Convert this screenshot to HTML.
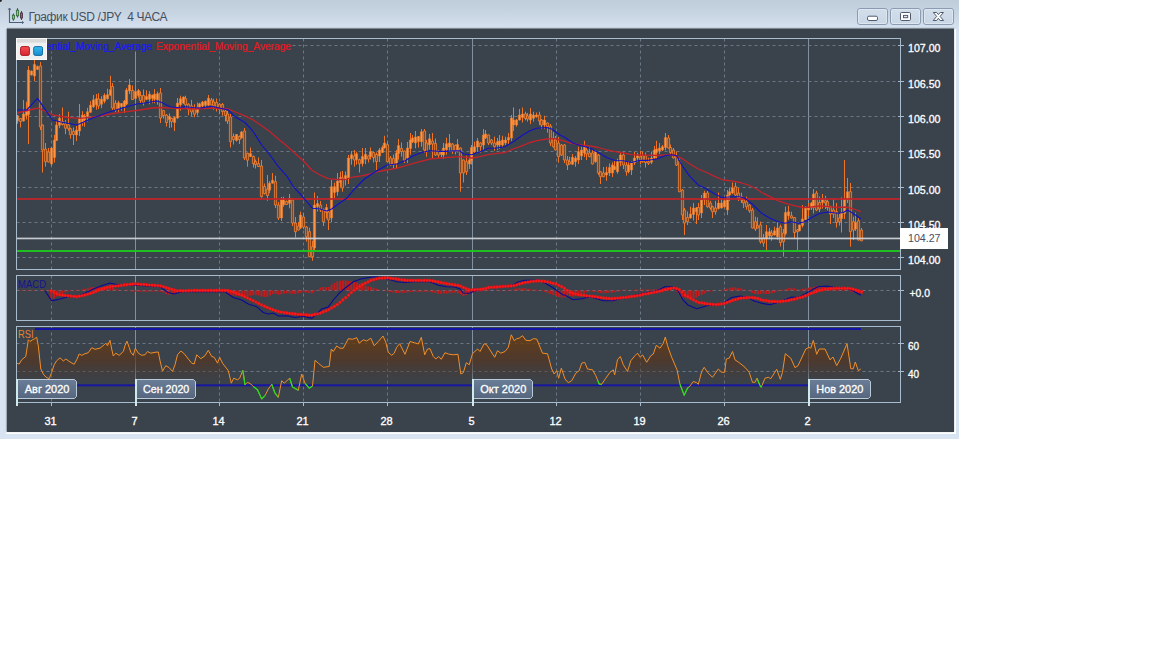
<!DOCTYPE html>
<html lang="ru"><head><meta charset="utf-8"><title>График USD /JPY 4 ЧАСА</title>
<style>
html,body{margin:0;padding:0;background:#fff;}
body{width:1152px;height:648px;position:relative;overflow:hidden;font-family:"Liberation Sans",sans-serif;}
#win{position:absolute;left:0;top:0;width:959px;height:438.5px;background:linear-gradient(#bfccda 0px,#c6d3e1 12px,#d6e2ef 29px,#d8e4f1 60px,#d8e4f1 100%);}
#win:before{content:"";position:absolute;left:0;top:0;width:2px;height:2px;background:#222;border-radius:0 0 2px 0}
#dark{position:absolute;left:6.5px;top:29px;width:947.5px;height:402.7px;background:#3a434c;box-shadow:0 -1px 1px rgba(60,70,80,.55), -1px 0 1px rgba(90,100,110,.35);}
#title{position:absolute;left:28.5px;top:9px;font-size:12px;line-height:16px;color:#474f5e;letter-spacing:-0.36px;white-space:pre;}
</style></head><body>
<div id="win">
<svg style="position:absolute;left:7px;top:5px" width="20" height="20" viewBox="7 5 20 20">
<path d="M9.5 8.3V22.5H23.3" fill="none" stroke="#4d5f77" stroke-width="1.1"/>
<path d="M8.2 9.8L9.5 8L10.8 9.8M22 21.2L23.6 22.5L22 23.8" fill="none" stroke="#4d5f77" stroke-width="0.9"/>
<path d="M13.4 13.5V20.7M17.5 8.2V17.5M21.5 11V20" stroke="#3f4a4c" stroke-width="1"/>
<rect x="12.4" y="15.2" width="2" height="3.8" fill="#8fc890" stroke="#356e3a" stroke-width="0.9"/>
<rect x="16.4" y="10.2" width="2.2" height="5.6" fill="#8fc890" stroke="#356e3a" stroke-width="0.9"/>
<rect x="20.5" y="13" width="2" height="5" fill="#8a6078" stroke="#503646" stroke-width="0.9"/>
</svg>
<div id="title">График USD /JPY  4 ЧАСА</div>
<svg style="position:absolute;left:850px;top:0" width="109" height="29" viewBox="850 0 109 29">
<defs><linearGradient id="bg1" x1="0" y1="0" x2="0" y2="1"><stop offset="0" stop-color="#d3deea"/><stop offset="1" stop-color="#c9d6e5"/></linearGradient></defs>
<g fill="url(#bg1)" stroke="#8b9bb1" stroke-width="1">
<rect x="857.5" y="8.5" width="30" height="16" rx="2.5"/><rect x="890.5" y="8.5" width="30" height="16" rx="2.5"/><rect x="923.5" y="8.5" width="30" height="16" rx="2.5"/></g>
<g fill="none" stroke="#e4ecf5" stroke-width="1" opacity="0.7">
<rect x="858.5" y="9.5" width="28" height="14" rx="1.5"/><rect x="891.5" y="9.5" width="28" height="14" rx="1.5"/><rect x="924.5" y="9.5" width="28" height="14" rx="1.5"/></g>
<rect x="867.5" y="16.2" width="10" height="4.3" rx="1.4" fill="#ffffff" stroke="#4f5a6e" stroke-width="1"/>
<rect x="900.5" y="12.5" width="10" height="8" rx="1.2" fill="#ffffff" stroke="#4f5a6e" stroke-width="1"/>
<rect x="903.5" y="15.4" width="4.2" height="2.3" fill="#dfe6ee" stroke="#4f5a6e" stroke-width="1"/>
<path d="M933.3 12.5h3.3l1.8 2.1 1.8-2.1h3.3l-3.4 3.9 3.5 4.1h-3.4l-1.8-2.2-1.8 2.2h-3.4l3.5-4.1z" fill="#ffffff" stroke="#4f5a6e" stroke-width="1" stroke-linejoin="round"/>
</svg>
<div style="position:absolute;left:6px;top:431px;width:950.3px;height:3.2px;background:#fcfdff"></div><div style="position:absolute;left:953px;top:29px;width:3.3px;height:405.2px;background:#fcfdff"></div>
<div id="dark"></div>
</div>
<svg width="1152" height="648" viewBox="0 0 1152 648" style="position:absolute;left:0;top:0" font-family="Liberation Sans, sans-serif">
<defs>
<linearGradient id="rsig" x1="0" y1="334" x2="0" y2="388" gradientUnits="userSpaceOnUse"><stop offset="0" stop-color="#6e3d0e" stop-opacity="0.85"/><stop offset="0.5" stop-color="#553520" stop-opacity="0.7"/><stop offset="1" stop-color="#40383a" stop-opacity="0"/></linearGradient>
<linearGradient id="lblg" x1="0" y1="0" x2="0" y2="1"><stop offset="0" stop-color="#6a7d97"/><stop offset="1" stop-color="#56667e"/></linearGradient>
<linearGradient id="wr" x1="0" y1="0" x2="0" y2="1"><stop offset="0" stop-color="#f45050"/><stop offset="1" stop-color="#d8242f"/></linearGradient><linearGradient id="wb" x1="0" y1="0" x2="0" y2="1"><stop offset="0" stop-color="#34bcf2"/><stop offset="1" stop-color="#1a8cca"/></linearGradient>
<clipPath id="cmain"><rect x="17" y="39" width="883" height="230"/></clipPath>
<clipPath id="crsi"><rect x="17" y="327" width="883" height="75"/></clipPath>
</defs>
<path d="M51.5 38.5V269" stroke="#6a7784" stroke-width="1" stroke-dasharray="3 3"/>
<path d="M135.5 38.5V269" stroke="#7f90a2" stroke-width="1"/>
<path d="M219.5 38.5V269" stroke="#6a7784" stroke-width="1" stroke-dasharray="3 3"/>
<path d="M303.5 38.5V269" stroke="#6a7784" stroke-width="1" stroke-dasharray="3 3"/>
<path d="M387.5 38.5V269" stroke="#6a7784" stroke-width="1" stroke-dasharray="3 3"/>
<path d="M472.5 38.5V269" stroke="#7f90a2" stroke-width="1"/>
<path d="M556.5 38.5V269" stroke="#6a7784" stroke-width="1" stroke-dasharray="3 3"/>
<path d="M640.5 38.5V269" stroke="#6a7784" stroke-width="1" stroke-dasharray="3 3"/>
<path d="M724.5 38.5V269" stroke="#6a7784" stroke-width="1" stroke-dasharray="3 3"/>
<path d="M808.5 38.5V269" stroke="#7f90a2" stroke-width="1"/>
<path d="M16.5 45.5H900.5" stroke="#6a7784" stroke-width="1" stroke-dasharray="3 3"/>
<path d="M898.0 45.5H904.0" stroke="#a9bccd" stroke-width="1"/>
<path d="M16.5 81.5H900.5" stroke="#6a7784" stroke-width="1" stroke-dasharray="3 3"/>
<path d="M898.0 81.5H904.0" stroke="#a9bccd" stroke-width="1"/>
<path d="M16.5 116.5H900.5" stroke="#6a7784" stroke-width="1" stroke-dasharray="3 3"/>
<path d="M898.0 116.5H904.0" stroke="#a9bccd" stroke-width="1"/>
<path d="M16.5 151.5H900.5" stroke="#6a7784" stroke-width="1" stroke-dasharray="3 3"/>
<path d="M898.0 151.5H904.0" stroke="#a9bccd" stroke-width="1"/>
<path d="M16.5 187.5H900.5" stroke="#6a7784" stroke-width="1" stroke-dasharray="3 3"/>
<path d="M898.0 187.5H904.0" stroke="#a9bccd" stroke-width="1"/>
<path d="M16.5 222.5H900.5" stroke="#6a7784" stroke-width="1" stroke-dasharray="3 3"/>
<path d="M898.0 222.5H904.0" stroke="#a9bccd" stroke-width="1"/>
<path d="M16.5 257.5H900.5" stroke="#6a7784" stroke-width="1" stroke-dasharray="3 3"/>
<path d="M898.0 257.5H904.0" stroke="#a9bccd" stroke-width="1"/>
<g clip-path="url(#cmain)">
<path d="M17.5 114.8V123.8M20.5 118.0V127.5M23.5 100.0V121.5M26.5 101.7V119.5M28.5 66.0V144.0M31.5 70.5V75.5M34.5 60.0V81.0M37.5 65.5V70.0M40.5 62.0V130.0M42.5 124.5V172.5M45.5 143.0V166.7M48.5 148.0V162.5M51.5 147.0V166.0M54.5 135.0V162.5M56.5 121.0V141.0M59.5 114.2V128.2M62.5 107.5V125.5M65.5 120.0V134.2M68.5 111.7V130.7M70.5 127.7V138.7M73.5 127.5V145.0M76.5 126.0V141.0M79.5 104.0V136.0M82.5 111.2V126.0M84.5 114.0V126.7M87.5 107.8V121.5M90.5 101.2V112.8M93.5 95.0V107.8M96.5 94.0V109.7M98.5 93.3V109.0M101.5 96.2V108.2M104.5 93.3V103.3M107.5 88.7V99.7M110.5 75.8V95.7M112.5 83.0V110.0M115.5 100.2V112.2M118.5 100.8V112.8M121.5 103.0V110.5M124.5 100.0V113.0M126.5 88.0V105.0M129.5 79.0V94.0M132.5 85.5V100.0M135.5 87.5V104.5M138.5 89.0V97.5M140.5 91.5V103.5M143.5 89.5V105.5M146.5 90.4V99.9M149.5 91.2V104.2M152.5 94.7V103.2M154.5 89.2V103.2M157.5 91.7V104.7M160.5 88.0V123.0M163.5 110.1V118.6M166.5 114.1V126.5M169.5 113.5V128.0M171.5 117.5V127.5M174.5 116.5V131.0M177.5 98.0V119.0M180.5 95.7V110.7M183.5 96.5V104.0M185.5 95.7V108.7M188.5 103.2V115.2M191.5 99.9V115.9M194.5 104.2V117.2M197.5 102.5V115.5M199.5 102.8V108.3M202.5 101.0V107.0M205.5 100.7V108.2M208.5 95.0V106.2M211.5 98.0V105.5M213.5 98.8V109.8M216.5 98.5V111.5M219.5 103.2V114.2M222.5 103.0V115.5M225.5 108.0V121.5M227.5 111.0V124.0M230.5 114.0V147.5M233.5 133.5V144.5M236.5 134.0V141.5M239.5 135.5V144.0M241.5 131.0V138.5M244.5 128.0V160.0M247.5 152.7V166.7M250.5 147.5V157.0M253.5 155.5V167.5M255.5 159.5V168.5M258.5 157.5V167.0M261.5 160.0V197.7M264.5 183.5V194.5M267.5 175.0V200.8M269.5 181.2V193.2M272.5 173.0V183.7M275.5 175.7V208.0M278.5 202.0V220.0M281.5 197.0V221.0M283.5 196.7V206.7M286.5 200.5V205.0M289.5 194.0V208.3M292.5 198.0V226.0M295.5 217.0V237.5M298.5 222.0V230.5M300.5 211.7V229.0M303.5 213.0V229.0M306.5 226.0V241.7M309.5 227.7V257.2M312.5 240.7V260.7M314.5 192.5V250.0M317.5 196.0V211.5M320.5 201.0V212.0M323.5 208.5V226.0M326.5 204.0V218.5M328.5 211.0V230.0M331.5 180.0V222.0M334.5 182.7V198.5M337.5 173.0V195.7M340.5 171.7V187.5M342.5 171.0V191.7M345.5 171.5V185.5M348.5 155.0V184.0M351.5 151.0V164.7M354.5 150.0V166.7M356.5 151.7V164.7M359.5 158.7V172.5M362.5 148.0V166.5M365.5 148.0V164.2M368.5 155.5V162.5M370.5 147.5V159.5M373.5 151.5V162.5M376.5 152.5V170.0M379.5 148.0V162.0M382.5 145.5V153.0M384.5 135.8V148.5M387.5 141.7V162.7M390.5 156.0V166.0M393.5 154.6V168.6M396.5 150.0V168.3M398.5 139.0V159.5M401.5 142.5V156.5M404.5 150.5V163.0M407.5 142.0V163.0M410.5 133.0V154.5M412.5 135.0V143.0M415.5 131.0V148.3M418.5 136.0V147.5M421.5 129.0V146.7M424.5 129.0V153.0M426.5 140.0V156.7M429.5 134.0V149.7M432.5 133.0V158.3M435.5 138.5V156.0M438.5 150.0V158.3M441.5 150.5V157.5M443.5 143.0V159.0M446.5 137.7V154.7M449.5 134.0V151.0M452.5 143.0V154.0M455.5 144.5V154.5M457.5 139.0V152.5M460.5 147.5V191.7M463.5 159.5V182.5M466.5 155.7V175.0M469.5 157.5V169.0M471.5 145.0V164.5M474.5 141.7V152.7M477.5 138.0V153.0M480.5 142.0V152.7M483.5 129.0V151.0M485.5 130.0V139.0M488.5 134.5V145.0M491.5 139.0V145.0M494.5 136.7V150.7M497.5 138.0V150.0M499.5 135.0V149.0M502.5 135.8V147.0M505.5 136.7V145.0M508.5 133.0V144.0M511.5 115.0V141.0M513.5 107.5V131.0M516.5 119.0V126.7M519.5 109.0V120.5M522.5 107.5V122.5M525.5 111.7V120.3M527.5 113.0V121.7M530.5 108.1V124.1M533.5 111.7V121.7M536.5 112.5V117.7M539.5 111.7V125.0M541.5 119.0V129.0M544.5 115.8V129.0M547.5 122.5V132.7M550.5 124.0V146.0M553.5 132.0V147.7M555.5 136.0V150.5M558.5 137.0V162.7M561.5 144.0V156.0M564.5 144.0V163.0M567.5 156.0V170.0M569.5 156.7V164.5M572.5 154.0V164.8M575.5 156.0V166.7M578.5 146.7V164.0M581.5 146.7V160.0M584.5 140.8V157.0M586.5 147.0V160.0M589.5 147.0V157.2M592.5 149.0V164.5M595.5 150.0V162.7M598.5 154.0V175.0M600.5 171.2V184.0M603.5 167.0V177.2M606.5 166.7V180.8M609.5 163.5V176.0M612.5 162.5V177.0M614.5 160.5V170.0M617.5 158.7V173.7M620.5 151.7V166.2M623.5 151.7V169.0M626.5 161.7V175.7M628.5 161.0V173.3M631.5 161.5V175.0M634.5 151.7V165.0M637.5 152.8V162.0M640.5 150.8V164.0M642.5 151.7V162.7M645.5 152.5V167.5M648.5 157.7V165.0M651.5 151.7V164.2M654.5 146.0V159.0M656.5 140.8V158.5M659.5 143.0V154.0M662.5 145.0V151.0M665.5 133.0V150.5M668.5 135.0V148.5M670.5 144.5V155.5M673.5 148.0V158.5M676.5 151.7V166.0M679.5 158.7V192.2M682.5 189.0V220.0M684.5 208.0V235.0M687.5 211.5V225.0M690.5 206.7V218.5M693.5 203.0V220.5M696.5 207.0V224.0M698.5 203.0V220.0M701.5 195.0V218.0M704.5 190.8V205.0M707.5 191.0V207.7M710.5 200.8V210.0M712.5 205.7V218.0M715.5 200.8V214.7M718.5 192.5V209.5M721.5 198.0V208.5M724.5 197.7V207.7M727.5 190.0V215.0M729.5 187.5V201.0M732.5 182.5V194.0M735.5 182.5V196.0M738.5 188.0V201.0M741.5 192.7V203.0M743.5 198.0V208.0M746.5 196.7V209.7M749.5 204.0V212.8M752.5 208.0V228.5M755.5 216.7V231.0M757.5 217.5V228.5M760.5 221.7V243.7M763.5 234.0V246.7M766.5 225.0V250.8M769.5 228.0V238.8M771.5 230.0V240.8M774.5 226.7V235.5M777.5 221.7V239.7M780.5 224.7V246.5M783.5 229.0V256.7M785.5 206.7V235.5M788.5 205.8V219.8M791.5 211.7V218.5M794.5 217.0V238.5M797.5 229.0V250.0M799.5 224.5V231.3M802.5 205.0V227.5M805.5 206.0V220.0M808.5 203.0V216.0M811.5 202.0V210.0M813.5 189.0V213.5M816.5 190.8V211.0M819.5 196.5V212.0M822.5 194.0V208.5M825.5 195.8V209.0M827.5 199.7V210.5M830.5 205.7V224.0M833.5 199.0V218.0M836.5 203.0V227.5M839.5 214.0V225.7M841.5 197.5V232.5M844.5 160.0V219.0M847.5 178.0V203.0M850.5 183.0V246.7M853.5 216.7V240.0M855.5 212.5V231.0M858.5 217.5V240.5M861.5 228.0V241.3" stroke="#f27422" stroke-width="1" fill="none"/>
<path d="M16.4 115.8h2.2V120.8h-2.2zM22.4 114.0h2.2V121.0h-2.2zM25.4 110.5h2.2V115.5h-2.2zM27.4 70.0h2.2V114.5h-2.2zM30.4 71.0h2.2V75.0h-2.2zM33.4 64.5h2.2V76.0h-2.2zM36.4 66.5h2.2V69.5h-2.2zM50.4 148.0h2.2V164.0h-2.2zM53.4 140.0h2.2V157.5h-2.2zM55.4 125.0h2.2V140.5h-2.2zM58.4 118.2h2.2V125.2h-2.2zM75.4 130.0h2.2V135.0h-2.2zM78.4 118.0h2.2V131.0h-2.2zM81.4 115.2h2.2V122.0h-2.2zM83.4 116.0h2.2V120.0h-2.2zM86.4 111.8h2.2V116.5h-2.2zM89.4 105.2h2.2V112.3h-2.2zM92.4 99.8h2.2V106.8h-2.2zM95.4 98.7h2.2V104.7h-2.2zM100.4 99.2h2.2V104.2h-2.2zM103.4 95.3h2.2V101.3h-2.2zM106.4 94.7h2.2V98.7h-2.2zM109.4 89.7h2.2V95.2h-2.2zM117.4 102.8h2.2V108.8h-2.2zM120.4 103.5h2.2V106.5h-2.2zM123.4 101.0h2.2V107.0h-2.2zM125.4 90.0h2.2V104.0h-2.2zM128.4 85.0h2.2V91.0h-2.2zM134.4 91.5h2.2V98.5h-2.2zM137.4 90.5h2.2V95.5h-2.2zM145.4 96.4h2.2V99.4h-2.2zM148.4 94.2h2.2V99.2h-2.2zM151.4 95.2h2.2V98.2h-2.2zM153.4 94.2h2.2V99.2h-2.2zM156.4 93.7h2.2V99.7h-2.2zM168.4 116.5h2.2V119.5h-2.2zM173.4 117.5h2.2V122.5h-2.2zM176.4 103.0h2.2V118.0h-2.2zM179.4 98.7h2.2V104.7h-2.2zM182.4 97.0h2.2V103.0h-2.2zM196.4 107.5h2.2V112.5h-2.2zM198.4 103.8h2.2V107.8h-2.2zM201.4 102.0h2.2V106.0h-2.2zM204.4 101.2h2.2V105.2h-2.2zM207.4 98.2h2.2V105.2h-2.2zM235.4 134.5h2.2V140.5h-2.2zM240.4 132.0h2.2V138.0h-2.2zM249.4 153.5h2.2V156.5h-2.2zM268.4 183.2h2.2V190.2h-2.2zM271.4 180.2h2.2V183.2h-2.2zM280.4 200.0h2.2V218.0h-2.2zM282.4 198.7h2.2V204.7h-2.2zM288.4 198.3h2.2V203.3h-2.2zM299.4 215.0h2.2V228.0h-2.2zM313.4 205.0h2.2V248.0h-2.2zM316.4 203.5h2.2V206.5h-2.2zM325.4 207.5h2.2V212.5h-2.2zM330.4 186.7h2.2V218.0h-2.2zM333.4 186.7h2.2V192.5h-2.2zM336.4 181.0h2.2V191.7h-2.2zM339.4 177.5h2.2V182.5h-2.2zM344.4 175.5h2.2V179.5h-2.2zM347.4 158.0h2.2V178.0h-2.2zM350.4 154.7h2.2V158.7h-2.2zM355.4 153.7h2.2V159.7h-2.2zM361.4 156.5h2.2V163.5h-2.2zM364.4 154.2h2.2V159.2h-2.2zM369.4 151.5h2.2V156.5h-2.2zM378.4 150.0h2.2V156.0h-2.2zM381.4 147.5h2.2V152.5h-2.2zM383.4 143.0h2.2V148.0h-2.2zM395.4 153.0h2.2V163.2h-2.2zM397.4 145.5h2.2V153.5h-2.2zM406.4 148.0h2.2V158.0h-2.2zM409.4 140.0h2.2V148.5h-2.2zM411.4 138.0h2.2V142.0h-2.2zM414.4 137.0h2.2V143.0h-2.2zM417.4 136.5h2.2V141.5h-2.2zM420.4 131.7h2.2V141.7h-2.2zM428.4 138.7h2.2V144.7h-2.2zM440.4 151.5h2.2V154.5h-2.2zM442.4 148.0h2.2V155.0h-2.2zM445.4 143.7h2.2V149.7h-2.2zM448.4 143.0h2.2V147.0h-2.2zM456.4 144.5h2.2V151.5h-2.2zM468.4 160.0h2.2V164.0h-2.2zM470.4 147.5h2.2V160.5h-2.2zM473.4 146.7h2.2V151.7h-2.2zM476.4 141.0h2.2V147.0h-2.2zM482.4 135.0h2.2V145.0h-2.2zM484.4 134.0h2.2V138.0h-2.2zM496.4 141.7h2.2V145.0h-2.2zM498.4 141.0h2.2V145.0h-2.2zM501.4 140.0h2.2V145.0h-2.2zM504.4 140.0h2.2V143.0h-2.2zM507.4 137.5h2.2V140.0h-2.2zM510.4 118.0h2.2V138.0h-2.2zM512.4 120.0h2.2V125.0h-2.2zM515.4 120.0h2.2V125.0h-2.2zM518.4 115.0h2.2V120.0h-2.2zM521.4 114.0h2.2V117.5h-2.2zM529.4 114.1h2.2V120.1h-2.2zM532.4 115.0h2.2V118.3h-2.2zM535.4 115.0h2.2V116.7h-2.2zM543.4 120.0h2.2V125.0h-2.2zM571.4 157.3h2.2V164.3h-2.2zM574.4 158.0h2.2V161.7h-2.2zM577.4 151.7h2.2V160.0h-2.2zM580.4 150.0h2.2V156.0h-2.2zM583.4 146.7h2.2V153.0h-2.2zM594.4 151.7h2.2V161.7h-2.2zM605.4 172.5h2.2V175.0h-2.2zM608.4 167.5h2.2V173.0h-2.2zM611.4 165.0h2.2V173.0h-2.2zM613.4 166.5h2.2V169.5h-2.2zM616.4 161.7h2.2V171.7h-2.2zM619.4 155.0h2.2V162.2h-2.2zM627.4 165.0h2.2V171.7h-2.2zM630.4 162.5h2.2V170.0h-2.2zM633.4 158.0h2.2V163.0h-2.2zM636.4 155.8h2.2V158.0h-2.2zM650.4 158.0h2.2V162.2h-2.2zM653.4 150.0h2.2V158.0h-2.2zM655.4 149.0h2.2V152.5h-2.2zM658.4 148.0h2.2V151.0h-2.2zM661.4 146.7h2.2V150.0h-2.2zM664.4 137.5h2.2V147.5h-2.2zM689.4 214.0h2.2V218.0h-2.2zM692.4 208.0h2.2V214.5h-2.2zM695.4 208.0h2.2V211.7h-2.2zM700.4 200.0h2.2V213.0h-2.2zM703.4 193.0h2.2V200.0h-2.2zM717.4 203.0h2.2V208.5h-2.2zM720.4 203.0h2.2V208.0h-2.2zM723.4 200.7h2.2V206.7h-2.2zM726.4 195.0h2.2V210.0h-2.2zM728.4 191.7h2.2V195.0h-2.2zM731.4 188.0h2.2V193.0h-2.2zM765.4 231.7h2.2V238.5h-2.2zM768.4 231.7h2.2V235.8h-2.2zM773.4 230.8h2.2V235.0h-2.2zM776.4 228.0h2.2V236.7h-2.2zM784.4 212.5h2.2V233.5h-2.2zM787.4 211.7h2.2V215.8h-2.2zM798.4 225.0h2.2V230.8h-2.2zM801.4 219.0h2.2V225.5h-2.2zM804.4 208.0h2.2V219.5h-2.2zM807.4 207.5h2.2V210.0h-2.2zM810.4 203.0h2.2V208.0h-2.2zM812.4 194.0h2.2V207.5h-2.2zM821.4 199.0h2.2V202.5h-2.2zM840.4 213.0h2.2V218.5h-2.2zM843.4 199.0h2.2V213.5h-2.2zM846.4 191.7h2.2V200.0h-2.2zM854.4 222.5h2.2V229.0h-2.2z" fill="#ff9442" stroke="#f27c28" stroke-width="0.5"/>
<path d="M19.4 118.5h2.2V121.5h-2.2zM39.4 66.0h2.2V127.0h-2.2zM41.4 125.0h2.2V150.0h-2.2zM44.4 149.0h2.2V161.7h-2.2zM47.4 152.0h2.2V162.0h-2.2zM61.4 121.5h2.2V124.5h-2.2zM64.4 124.0h2.2V128.2h-2.2zM67.4 124.7h2.2V128.7h-2.2zM69.4 128.7h2.2V134.7h-2.2zM72.4 131.5h2.2V134.5h-2.2zM97.4 99.0h2.2V106.0h-2.2zM111.4 86.5h2.2V108.0h-2.2zM114.4 103.2h2.2V110.2h-2.2zM131.4 90.5h2.2V99.5h-2.2zM139.4 95.5h2.2V100.5h-2.2zM142.4 95.5h2.2V102.5h-2.2zM159.4 93.0h2.2V118.0h-2.2zM162.4 110.6h2.2V115.6h-2.2zM165.4 115.1h2.2V122.5h-2.2zM170.4 118.5h2.2V121.5h-2.2zM184.4 98.7h2.2V104.7h-2.2zM187.4 104.2h2.2V109.2h-2.2zM190.4 105.9h2.2V111.9h-2.2zM193.4 109.2h2.2V114.2h-2.2zM210.4 100.0h2.2V105.0h-2.2zM212.4 101.8h2.2V105.8h-2.2zM215.4 102.5h2.2V107.5h-2.2zM218.4 104.2h2.2V109.2h-2.2zM221.4 104.5h2.2V111.5h-2.2zM224.4 111.0h2.2V115.5h-2.2zM226.4 114.0h2.2V121.0h-2.2zM229.4 117.0h2.2V141.7h-2.2zM232.4 136.5h2.2V139.5h-2.2zM238.4 136.5h2.2V139.5h-2.2zM243.4 131.0h2.2V158.0h-2.2zM246.4 153.2h2.2V160.2h-2.2zM252.4 156.5h2.2V163.5h-2.2zM254.4 161.5h2.2V164.5h-2.2zM257.4 163.5h2.2V166.5h-2.2zM260.4 166.0h2.2V196.7h-2.2zM263.4 186.5h2.2V193.5h-2.2zM266.4 189.2h2.2V195.5h-2.2zM274.4 181.7h2.2V205.0h-2.2zM277.4 205.0h2.2V218.0h-2.2zM285.4 201.5h2.2V204.5h-2.2zM291.4 200.0h2.2V223.0h-2.2zM294.4 223.0h2.2V231.7h-2.2zM297.4 226.0h2.2V230.0h-2.2zM302.4 217.0h2.2V227.0h-2.2zM305.4 227.0h2.2V236.7h-2.2zM308.4 231.7h2.2V256.7h-2.2zM311.4 246.7h2.2V256.7h-2.2zM319.4 205.0h2.2V210.0h-2.2zM322.4 209.5h2.2V221.7h-2.2zM327.4 212.0h2.2V220.0h-2.2zM341.4 178.0h2.2V188.0h-2.2zM353.4 156.0h2.2V160.0h-2.2zM358.4 159.7h2.2V163.7h-2.2zM367.4 156.0h2.2V159.0h-2.2zM372.4 152.5h2.2V157.5h-2.2zM375.4 154.5h2.2V161.5h-2.2zM386.4 144.7h2.2V161.7h-2.2zM389.4 158.0h2.2V165.0h-2.2zM392.4 158.6h2.2V164.6h-2.2zM400.4 148.5h2.2V151.5h-2.2zM403.4 151.0h2.2V160.0h-2.2zM423.4 131.0h2.2V150.0h-2.2zM425.4 143.0h2.2V151.7h-2.2zM431.4 141.0h2.2V144.0h-2.2zM434.4 143.5h2.2V155.0h-2.2zM437.4 151.0h2.2V155.0h-2.2zM451.4 144.0h2.2V151.0h-2.2zM454.4 145.5h2.2V150.5h-2.2zM459.4 148.0h2.2V173.0h-2.2zM462.4 160.0h2.2V173.0h-2.2zM465.4 161.7h2.2V171.7h-2.2zM479.4 143.0h2.2V146.7h-2.2zM487.4 135.0h2.2V143.0h-2.2zM490.4 140.0h2.2V143.0h-2.2zM493.4 143.0h2.2V146.7h-2.2zM524.4 114.0h2.2V118.3h-2.2zM526.4 116.0h2.2V119.0h-2.2zM538.4 115.0h2.2V121.0h-2.2zM540.4 120.0h2.2V125.0h-2.2zM546.4 123.0h2.2V126.7h-2.2zM549.4 126.0h2.2V143.0h-2.2zM552.4 138.0h2.2V146.7h-2.2zM554.4 140.0h2.2V150.0h-2.2zM557.4 143.0h2.2V156.7h-2.2zM560.4 145.0h2.2V155.0h-2.2zM563.4 145.0h2.2V160.0h-2.2zM566.4 160.0h2.2V165.0h-2.2zM568.4 161.7h2.2V164.0h-2.2zM585.4 150.0h2.2V154.0h-2.2zM588.4 153.0h2.2V156.7h-2.2zM591.4 153.0h2.2V164.0h-2.2zM597.4 155.0h2.2V173.0h-2.2zM599.4 171.7h2.2V176.7h-2.2zM602.4 173.0h2.2V176.7h-2.2zM622.4 155.0h2.2V165.0h-2.2zM625.4 165.0h2.2V171.7h-2.2zM639.4 156.7h2.2V160.0h-2.2zM641.4 155.7h2.2V161.7h-2.2zM644.4 155.8h2.2V162.5h-2.2zM647.4 161.7h2.2V163.3h-2.2zM667.4 138.0h2.2V148.0h-2.2zM669.4 147.5h2.2V152.5h-2.2zM672.4 150.0h2.2V158.0h-2.2zM675.4 156.7h2.2V165.0h-2.2zM678.4 161.7h2.2V191.7h-2.2zM681.4 190.0h2.2V215.0h-2.2zM683.4 210.0h2.2V223.0h-2.2zM686.4 217.5h2.2V221.7h-2.2zM697.4 207.5h2.2V215.0h-2.2zM706.4 193.0h2.2V206.7h-2.2zM709.4 203.0h2.2V208.0h-2.2zM711.4 206.7h2.2V211.7h-2.2zM714.4 208.0h2.2V211.7h-2.2zM734.4 186.7h2.2V195.0h-2.2zM737.4 193.0h2.2V198.0h-2.2zM740.4 196.7h2.2V200.0h-2.2zM742.4 200.0h2.2V203.0h-2.2zM745.4 201.7h2.2V206.7h-2.2zM748.4 205.0h2.2V210.8h-2.2zM751.4 210.0h2.2V228.0h-2.2zM754.4 221.7h2.2V229.0h-2.2zM756.4 225.8h2.2V228.0h-2.2zM759.4 225.0h2.2V241.7h-2.2zM762.4 238.0h2.2V243.0h-2.2zM770.4 233.0h2.2V235.8h-2.2zM779.4 226.7h2.2V242.5h-2.2zM782.4 233.0h2.2V241.7h-2.2zM790.4 215.8h2.2V218.0h-2.2zM793.4 217.5h2.2V232.5h-2.2zM796.4 230.0h2.2V231.7h-2.2zM815.4 193.0h2.2V210.0h-2.2zM818.4 202.5h2.2V209.0h-2.2zM824.4 200.8h2.2V203.0h-2.2zM826.4 201.7h2.2V207.5h-2.2zM829.4 206.7h2.2V214.0h-2.2zM832.4 210.0h2.2V214.0h-2.2zM835.4 211.7h2.2V222.5h-2.2zM838.4 218.0h2.2V221.7h-2.2zM849.4 191.7h2.2V231.7h-2.2zM852.4 221.7h2.2V230.0h-2.2zM857.4 220.8h2.2V240.0h-2.2zM860.4 230.0h2.2V240.8h-2.2z" fill="#7a4a2a" stroke="#f58232" stroke-width="0.8"/>
</g>
<rect x="17" y="198" width="884" height="2" fill="#c0242a" opacity="0.88"/>
<rect x="17" y="237.6" width="884" height="1.7" fill="#d2d5d8" opacity="0.92"/>
<rect x="17" y="250" width="884" height="2" fill="#1fc61f" opacity="0.95"/>
<g clip-path="url(#cmain)">
<polyline points="17.0,113.0 38.0,108.0 53.0,115.0 68.0,117.5 80.0,118.3 96.7,116.7 110.0,114.0 126.7,111.7 140.0,110.0 151.7,108.0 160.0,107.5 176.7,108.3 195.0,109.0 211.7,108.0 228.3,109.0 236.7,112.5 245.0,115.8 253.3,120.0 261.7,125.8 270.0,131.7 278.3,139.0 286.7,145.8 295.0,153.3 303.3,160.8 311.7,170.0 320.0,175.0 328.3,178.7 336.7,179.5 345.0,179.5 353.3,177.0 361.7,175.8 370.0,174.0 378.0,171.7 386.7,170.0 396.7,168.3 413.3,163.3 430.0,159.0 446.7,157.5 460.0,156.7 471.7,158.0 480.0,156.7 488.3,154.7 496.7,153.3 505.0,152.5 513.3,149.0 521.7,145.8 530.0,142.5 538.3,140.3 546.7,139.0 555.0,138.7 563.3,140.8 571.7,143.3 581.7,145.0 590.0,145.8 598.3,147.5 606.7,150.0 615.0,151.7 623.3,153.0 631.7,154.7 640.0,155.0 656.7,155.3 673.3,154.7 681.7,158.3 690.0,164.0 698.3,169.0 706.7,172.5 715.0,176.7 723.3,180.0 731.7,180.8 740.0,182.5 748.3,185.0 756.7,189.0 761.7,192.5 770.0,196.7 778.3,200.8 786.7,203.7 795.0,205.8 803.3,207.5 811.7,207.0 820.0,205.8 828.3,206.7 836.7,207.5 845.0,207.0 851.7,208.3 856.7,210.0 860.8,211.7" fill="none" stroke="#c4222a" stroke-width="1.3" stroke-linejoin="round"/>
<polyline points="17.0,110.0 26.7,110.0 37.5,98.3 52.5,120.0 60.0,121.7 76.7,125.0 93.0,118.0 110.0,111.7 126.7,106.7 136.7,104.0 148.0,102.5 156.7,101.0 161.7,102.5 170.0,106.7 176.7,107.5 185.0,106.7 193.0,107.5 201.7,108.0 211.7,106.3 228.3,110.0 235.0,116.7 245.0,122.5 253.3,131.7 261.7,145.0 270.0,155.0 278.3,166.7 286.7,175.8 293.3,186.7 303.3,197.5 312.5,208.3 320.0,209.0 326.7,211.0 331.7,209.0 338.3,204.0 346.7,198.3 355.0,188.3 363.3,180.0 371.7,174.0 380.0,169.0 387.5,165.0 396.7,164.0 405.0,160.8 413.3,155.8 421.7,152.5 430.0,150.8 438.3,151.3 446.7,151.3 455.0,150.8 460.0,150.8 463.3,154.0 471.7,154.7 480.0,151.7 488.3,148.3 496.7,148.0 505.0,146.7 513.3,141.7 521.7,135.8 530.0,130.8 536.7,128.3 546.7,127.5 551.7,129.0 560.0,135.0 565.0,137.5 573.3,143.3 581.7,145.8 590.0,148.3 598.3,152.5 606.7,157.5 615.0,160.5 623.3,160.8 631.7,162.5 640.0,160.3 648.3,160.3 656.7,159.0 665.0,155.8 671.7,154.7 676.7,155.8 681.7,165.0 690.0,176.7 698.3,185.0 706.7,189.0 715.0,194.0 721.7,197.5 731.7,196.7 740.0,196.7 745.0,198.3 753.3,205.0 761.7,213.3 770.0,218.3 778.3,221.7 785.0,223.3 791.7,221.7 798.3,223.3 805.0,221.7 811.7,217.5 820.0,213.3 828.3,212.0 836.7,213.3 843.3,212.5 847.5,210.0 851.7,212.5 856.7,215.8 860.8,219.0" fill="none" stroke="#1212c4" stroke-width="1.15" stroke-linejoin="round"/>
</g>
<rect x="16.5" y="38.5" width="884.0" height="231" fill="none" stroke="#a9bccd" stroke-width="1"/>
<rect x="17" y="39" width="275" height="12.5" fill="#3a434c"/>
<text x="17" y="50.4" font-size="11" fill="#1818f8" stroke="#1818f8" stroke-width="0.2" textLength="135" lengthAdjust="spacingAndGlyphs">Exponential_Moving_Average</text>
<text x="156" y="50.4" font-size="11" fill="#e8181e" stroke="#e8181e" stroke-width="0.2" textLength="135" lengthAdjust="spacingAndGlyphs">Exponential_Moving_Average</text>
<text x="908" y="52.0" font-size="11" fill="#ffffff" stroke="#ffffff" stroke-width="0.3" textLength="32.5" lengthAdjust="spacingAndGlyphs">107.00</text>
<text x="908" y="88.0" font-size="11" fill="#ffffff" stroke="#ffffff" stroke-width="0.3" textLength="32.5" lengthAdjust="spacingAndGlyphs">106.50</text>
<text x="908" y="123.0" font-size="11" fill="#ffffff" stroke="#ffffff" stroke-width="0.3" textLength="32.5" lengthAdjust="spacingAndGlyphs">106.00</text>
<text x="908" y="158.0" font-size="11" fill="#ffffff" stroke="#ffffff" stroke-width="0.3" textLength="32.5" lengthAdjust="spacingAndGlyphs">105.50</text>
<text x="908" y="194.0" font-size="11" fill="#ffffff" stroke="#ffffff" stroke-width="0.3" textLength="32.5" lengthAdjust="spacingAndGlyphs">105.00</text>
<text x="908" y="229.0" font-size="11" fill="#ffffff" stroke="#ffffff" stroke-width="0.3" textLength="32.5" lengthAdjust="spacingAndGlyphs">104.50</text>
<text x="908" y="264.0" font-size="11" fill="#ffffff" stroke="#ffffff" stroke-width="0.3" textLength="32.5" lengthAdjust="spacingAndGlyphs">104.00</text>
<rect x="900" y="228" width="48" height="21" fill="#ffffff"/>
<text x="908" y="242.2" font-size="11" fill="#474c63" textLength="32.5" lengthAdjust="spacingAndGlyphs">104.27</text>
<path d="M51.5 275.5V320.5" stroke="#6a7784" stroke-width="1" stroke-dasharray="3 3"/>
<path d="M135.5 275.5V320.5" stroke="#7f90a2" stroke-width="1"/>
<path d="M219.5 275.5V320.5" stroke="#6a7784" stroke-width="1" stroke-dasharray="3 3"/>
<path d="M303.5 275.5V320.5" stroke="#6a7784" stroke-width="1" stroke-dasharray="3 3"/>
<path d="M387.5 275.5V320.5" stroke="#6a7784" stroke-width="1" stroke-dasharray="3 3"/>
<path d="M472.5 275.5V320.5" stroke="#7f90a2" stroke-width="1"/>
<path d="M556.5 275.5V320.5" stroke="#6a7784" stroke-width="1" stroke-dasharray="3 3"/>
<path d="M640.5 275.5V320.5" stroke="#6a7784" stroke-width="1" stroke-dasharray="3 3"/>
<path d="M724.5 275.5V320.5" stroke="#6a7784" stroke-width="1" stroke-dasharray="3 3"/>
<path d="M808.5 275.5V320.5" stroke="#7f90a2" stroke-width="1"/>
<path d="M16.5 290.5H900.5" stroke="#6a7784" stroke-width="1" stroke-dasharray="3 3"/>
<path d="M898.0 290.5H904.0" stroke="#a9bccd" stroke-width="1"/>
<path d="M20.4 290.5v0.6M23.2 290.5v-0.5M26.0 290.5v0.6M28.8 290.5v0.6M31.6 290.5v-0.5M34.4 290.5v0.6M40.0 290.5v0.6M42.8 290.5v-0.8M45.6 290.5v0.6M48.4 290.5v-0.5M51.2 290.5v9.3M54.1 290.5v7.7M56.9 290.5v5.9M59.7 290.5v4.2M62.5 290.5v3.1M65.3 290.5v2.0M68.1 290.5v0.9M70.9 290.5v0.6M73.7 290.5v0.8M76.5 290.5v-0.8M79.3 290.5v-0.5M82.1 290.5v-1.1M84.9 290.5v-1.7M87.7 290.5v-2.3M90.5 290.5v-2.9M93.3 290.5v-3.5M96.1 290.5v-3.4M98.9 290.5v-3.3M101.7 290.5v-3.2M104.5 290.5v-3.4M107.3 290.5v-3.5M110.1 290.5v-3.7M112.9 290.5v-2.7M115.7 290.5v-1.7M118.5 290.5v-0.8M121.3 290.5v-0.5M127.0 290.5v-0.8M129.8 290.5v0.8M132.6 290.5v0.9M135.4 290.5v1.3M138.2 290.5v1.3M141.0 290.5v1.3M143.8 290.5v1.3M146.6 290.5v1.2M149.4 290.5v1.1M152.2 290.5v1.0M155.0 290.5v0.9M157.8 290.5v0.9M160.6 290.5v1.2M163.4 290.5v2.3M166.2 290.5v3.5M169.0 290.5v4.2M171.8 290.5v4.1M174.6 290.5v3.6M177.4 290.5v2.2M180.2 290.5v1.3M183.0 290.5v0.9M185.8 290.5v0.9M188.6 290.5v1.0M191.4 290.5v1.1M194.3 290.5v1.2M197.1 290.5v1.2M199.9 290.5v1.2M202.7 290.5v1.2M205.5 290.5v1.2M208.3 290.5v1.2M211.1 290.5v1.2M213.9 290.5v1.2M216.7 290.5v1.2M219.5 290.5v1.2M222.3 290.5v1.2M225.1 290.5v1.3M227.9 290.5v3.2M230.7 290.5v4.4M233.5 290.5v5.3M236.3 290.5v5.2M239.1 290.5v4.9M241.9 290.5v4.7M244.7 290.5v5.2M247.5 290.5v5.6M250.3 290.5v5.3M253.1 290.5v4.8M255.9 290.5v4.3M258.7 290.5v5.0M261.5 290.5v6.0M264.4 290.5v6.6M267.2 290.5v6.2M270.0 290.5v5.0M272.8 290.5v3.4M275.6 290.5v3.6M278.4 290.5v4.3M281.2 290.5v3.8M284.0 290.5v3.3M286.8 290.5v2.8M289.6 290.5v3.0M292.4 290.5v3.3M295.2 290.5v3.5M298.0 290.5v2.8M300.8 290.5v2.2M303.6 290.5v1.7M306.4 290.5v2.1M309.2 290.5v2.6M312.0 290.5v2.8M314.8 290.5v1.1M317.6 290.5v-0.8M320.4 290.5v-2.9M323.2 290.5v-3.5M326.0 290.5v-3.2M328.8 290.5v-3.4M331.6 290.5v-5.7M334.5 290.5v-7.6M337.3 290.5v-9.0M340.1 290.5v-9.8M342.9 290.5v-9.9M345.7 290.5v-9.9M348.5 290.5v-9.6M351.3 290.5v-9.3M354.1 290.5v-8.8M356.9 290.5v-7.9M359.7 290.5v-7.0M362.5 290.5v-6.0M365.3 290.5v-5.1M368.1 290.5v-4.1M370.9 290.5v-3.4M373.7 290.5v-2.7M376.5 290.5v-1.8M379.3 290.5v-1.0M384.9 290.5v-0.8M387.7 290.5v1.0M390.5 290.5v1.5M393.3 290.5v2.1M396.1 290.5v2.6M398.9 290.5v2.6M401.7 290.5v2.4M404.6 290.5v2.2M407.4 290.5v1.9M410.2 290.5v1.6M413.0 290.5v1.2M415.8 290.5v1.2M418.6 290.5v1.2M421.4 290.5v1.2M424.2 290.5v1.2M427.0 290.5v1.2M429.8 290.5v1.2M432.6 290.5v1.9M435.4 290.5v2.6M438.2 290.5v3.3M441.0 290.5v3.2M443.8 290.5v3.1M446.6 290.5v3.0M449.4 290.5v2.7M452.2 290.5v2.3M455.0 290.5v2.0M457.8 290.5v2.7M460.6 290.5v3.7M463.4 290.5v5.5M466.2 290.5v4.4M469.0 290.5v3.6M471.8 290.5v2.3M474.7 290.5v1.2M477.5 290.5v0.9M480.3 290.5v0.8M485.9 290.5v0.8M488.7 290.5v-0.8M497.1 290.5v-0.8M499.9 290.5v0.8M505.5 290.5v-0.5M508.3 290.5v-0.6M511.1 290.5v-0.7M513.9 290.5v-1.2M516.7 290.5v-2.0M519.5 290.5v-2.3M522.3 290.5v-2.2M525.1 290.5v-2.3M527.9 290.5v-1.8M530.7 290.5v-1.3M533.5 290.5v-1.0M536.3 290.5v-0.7M539.1 290.5v-0.6M541.9 290.5v-0.8M544.8 290.5v1.4M547.6 290.5v2.6M550.4 290.5v3.6M553.2 290.5v4.6M556.0 290.5v5.6M558.8 290.5v6.4M561.6 290.5v7.2M564.4 290.5v6.7M567.2 290.5v5.9M570.0 290.5v5.4M572.8 290.5v6.3M575.6 290.5v5.4M578.4 290.5v4.4M581.2 290.5v3.7M584.0 290.5v2.7M586.8 290.5v1.7M589.6 290.5v0.7M592.4 290.5v1.0M595.2 290.5v1.5M598.0 290.5v1.8M600.8 290.5v2.4M603.6 290.5v2.8M606.4 290.5v2.5M609.2 290.5v2.3M612.0 290.5v2.1M614.9 290.5v1.8M617.7 290.5v1.2M620.5 290.5v0.6M623.3 290.5v-0.8M626.1 290.5v-0.8M631.7 290.5v-0.6M634.5 290.5v-0.8M637.3 290.5v-1.0M640.1 290.5v-1.1M642.9 290.5v-1.0M645.7 290.5v-1.0M648.5 290.5v-1.0M651.3 290.5v-1.0M654.1 290.5v-1.0M656.9 290.5v-1.1M659.7 290.5v-1.9M662.5 290.5v-2.6M665.3 290.5v-2.9M668.1 290.5v-2.1M670.9 290.5v-1.7M676.5 290.5v1.2M679.3 290.5v3.5M682.1 290.5v6.3M685.0 290.5v7.0M687.8 290.5v8.1M690.6 290.5v7.8M693.4 290.5v7.4M696.2 290.5v7.1M699.0 290.5v5.5M701.8 290.5v4.3M704.6 290.5v3.0M707.4 290.5v1.6M710.2 290.5v1.1M713.0 290.5v0.8M721.4 290.5v-0.8M724.2 290.5v-1.0M727.0 290.5v-1.8M729.8 290.5v-2.7M732.6 290.5v-3.2M735.4 290.5v-2.9M738.2 290.5v-2.5M741.0 290.5v-2.0M743.8 290.5v-1.2M749.4 290.5v0.7M752.2 290.5v2.4M755.1 290.5v3.4M757.9 290.5v3.7M760.7 290.5v3.4M763.5 290.5v3.3M766.3 290.5v3.4M769.1 290.5v3.4M771.9 290.5v2.8M774.7 290.5v1.9M777.5 290.5v1.0M780.3 290.5v-0.8M783.1 290.5v-0.7M785.9 290.5v-1.6M788.7 290.5v-2.2M791.5 290.5v-2.7M794.3 290.5v-1.9M797.1 290.5v-1.0M799.9 290.5v-1.1M802.7 290.5v-1.7M805.5 290.5v-2.1M808.3 290.5v-2.7M811.1 290.5v-3.2M813.9 290.5v-3.7M816.7 290.5v-4.1M819.5 290.5v-3.9M822.3 290.5v-3.5M825.2 290.5v-3.2M828.0 290.5v-2.5M830.8 290.5v-1.8M833.6 290.5v-1.2M836.4 290.5v-0.7M839.2 290.5v-0.6M842.0 290.5v0.8M844.8 290.5v-0.8M850.4 290.5v1.3M853.2 290.5v1.7M856.0 290.5v2.5M858.8 290.5v3.3M861.6 290.5v3.6" stroke="#c41c1c" stroke-width="2" fill="none"/>
<polyline points="45.0,290.8 51.7,300.8 60.0,299.0 68.0,296.7 76.7,296.7 85.0,293.3 93.3,289.0 101.7,285.8 110.0,283.0 118.3,285.0 126.7,284.7 143.0,285.8 160.0,286.7 168.0,292.5 174.0,294.0 181.7,291.7 193.0,291.7 225.0,291.7 233.3,297.5 241.7,300.0 248.3,304.0 256.7,306.7 263.3,312.5 268.3,314.0 273.3,313.0 278.3,316.0 286.7,315.8 295.0,317.5 303.3,316.3 311.7,318.3 316.7,314.0 321.7,309.0 328.3,307.0 333.3,300.0 340.0,292.5 345.0,288.3 353.3,281.7 361.7,278.7 371.7,277.0 378.3,277.0 388.0,279.0 396.7,281.7 405.0,282.5 413.3,281.7 430.0,281.7 438.3,285.3 446.7,286.7 455.0,287.0 460.0,289.0 463.3,293.0 470.0,293.3 473.3,291.3 480.0,290.0 488.3,287.5 513.0,285.0 518.0,282.0 525.0,280.3 533.0,280.3 540.0,280.3 546.7,284.0 555.0,289.0 563.0,295.0 565.0,295.0 573.0,299.7 581.7,298.7 590.0,296.7 598.0,299.0 603.0,300.8 613.0,300.8 620.0,298.7 640.0,294.0 656.7,290.8 665.0,286.7 671.7,286.7 678.0,290.8 683.0,300.0 688.0,305.0 696.7,308.7 703.0,307.0 708.0,305.3 715.0,305.3 723.0,303.3 731.7,297.5 740.0,296.0 748.3,297.5 753.3,300.8 761.7,303.3 770.0,304.7 778.0,302.5 786.7,299.0 791.7,297.0 798.0,297.5 805.0,294.0 811.7,290.0 818.0,286.7 826.7,286.0 835.0,287.5 845.0,288.0 853.0,290.8 860.8,295.3" fill="none" stroke="#0a0a96" stroke-width="1.1"/>
<g fill="#ff1a1a" stroke="#e01010" stroke-width="0.5"><circle cx="51.2" cy="290.9" r="1.4"/><circle cx="54.1" cy="292.6" r="1.4"/><circle cx="56.9" cy="293.7" r="1.4"/><circle cx="59.7" cy="294.9" r="1.4"/><circle cx="62.5" cy="295.2" r="1.4"/><circle cx="65.3" cy="295.5" r="1.4"/><circle cx="68.1" cy="295.8" r="1.4"/><circle cx="70.9" cy="296.1" r="1.4"/><circle cx="73.7" cy="296.4" r="1.4"/><circle cx="76.5" cy="296.7" r="1.4"/><circle cx="79.3" cy="296.2" r="1.4"/><circle cx="82.1" cy="295.6" r="1.4"/><circle cx="84.9" cy="295.0" r="1.4"/><circle cx="87.7" cy="294.2" r="1.4"/><circle cx="90.5" cy="293.3" r="1.4"/><circle cx="93.3" cy="292.5" r="1.4"/><circle cx="96.1" cy="291.3" r="1.4"/><circle cx="98.9" cy="290.2" r="1.4"/><circle cx="101.7" cy="289.0" r="1.4"/><circle cx="104.5" cy="288.2" r="1.4"/><circle cx="107.3" cy="287.4" r="1.4"/><circle cx="110.1" cy="286.7" r="1.4"/><circle cx="112.9" cy="286.4" r="1.4"/><circle cx="115.7" cy="286.1" r="1.4"/><circle cx="118.5" cy="285.8" r="1.4"/><circle cx="121.3" cy="285.4" r="1.4"/><circle cx="124.2" cy="285.0" r="1.4"/><circle cx="127.0" cy="284.7" r="1.4"/><circle cx="129.8" cy="284.4" r="1.4"/><circle cx="132.6" cy="284.2" r="1.4"/><circle cx="135.4" cy="284.0" r="1.4"/><circle cx="138.2" cy="284.2" r="1.4"/><circle cx="141.0" cy="284.4" r="1.4"/><circle cx="143.8" cy="284.5" r="1.4"/><circle cx="146.6" cy="284.8" r="1.4"/><circle cx="149.4" cy="285.1" r="1.4"/><circle cx="152.2" cy="285.3" r="1.4"/><circle cx="155.0" cy="285.5" r="1.4"/><circle cx="157.8" cy="285.7" r="1.4"/><circle cx="160.6" cy="286.0" r="1.4"/><circle cx="163.4" cy="286.8" r="1.4"/><circle cx="166.2" cy="287.7" r="1.4"/><circle cx="169.0" cy="288.5" r="1.4"/><circle cx="171.8" cy="289.3" r="1.4"/><circle cx="174.6" cy="290.2" r="1.4"/><circle cx="177.4" cy="290.8" r="1.4"/><circle cx="180.2" cy="290.8" r="1.4"/><circle cx="183.0" cy="290.8" r="1.4"/><circle cx="185.8" cy="290.8" r="1.4"/><circle cx="188.6" cy="290.7" r="1.4"/><circle cx="191.4" cy="290.6" r="1.4"/><circle cx="194.3" cy="290.5" r="1.4"/><circle cx="197.1" cy="290.5" r="1.4"/><circle cx="199.9" cy="290.5" r="1.4"/><circle cx="202.7" cy="290.5" r="1.4"/><circle cx="205.5" cy="290.5" r="1.4"/><circle cx="208.3" cy="290.5" r="1.4"/><circle cx="211.1" cy="290.5" r="1.4"/><circle cx="213.9" cy="290.5" r="1.4"/><circle cx="216.7" cy="290.5" r="1.4"/><circle cx="219.5" cy="290.5" r="1.4"/><circle cx="222.3" cy="290.5" r="1.4"/><circle cx="225.1" cy="290.5" r="1.4"/><circle cx="227.9" cy="290.5" r="1.4"/><circle cx="230.7" cy="291.3" r="1.4"/><circle cx="233.5" cy="292.2" r="1.4"/><circle cx="236.3" cy="293.2" r="1.4"/><circle cx="239.1" cy="294.3" r="1.4"/><circle cx="241.9" cy="295.4" r="1.4"/><circle cx="244.7" cy="296.6" r="1.4"/><circle cx="247.5" cy="297.9" r="1.4"/><circle cx="250.3" cy="299.3" r="1.4"/><circle cx="253.1" cy="300.7" r="1.4"/><circle cx="255.9" cy="302.1" r="1.4"/><circle cx="258.7" cy="303.5" r="1.4"/><circle cx="261.5" cy="304.9" r="1.4"/><circle cx="264.4" cy="306.2" r="1.4"/><circle cx="267.2" cy="307.4" r="1.4"/><circle cx="270.0" cy="308.7" r="1.4"/><circle cx="272.8" cy="309.7" r="1.4"/><circle cx="275.6" cy="310.7" r="1.4"/><circle cx="278.4" cy="311.7" r="1.4"/><circle cx="281.2" cy="312.1" r="1.4"/><circle cx="284.0" cy="312.6" r="1.4"/><circle cx="286.8" cy="313.0" r="1.4"/><circle cx="289.6" cy="313.3" r="1.4"/><circle cx="292.4" cy="313.7" r="1.4"/><circle cx="295.2" cy="314.0" r="1.4"/><circle cx="298.0" cy="314.3" r="1.4"/><circle cx="300.8" cy="314.5" r="1.4"/><circle cx="303.6" cy="314.7" r="1.4"/><circle cx="306.4" cy="314.9" r="1.4"/><circle cx="309.2" cy="315.1" r="1.4"/><circle cx="312.0" cy="315.2" r="1.4"/><circle cx="314.8" cy="314.5" r="1.4"/><circle cx="317.6" cy="313.9" r="1.4"/><circle cx="320.4" cy="313.1" r="1.4"/><circle cx="323.2" cy="312.0" r="1.4"/><circle cx="326.0" cy="310.9" r="1.4"/><circle cx="328.8" cy="309.7" r="1.4"/><circle cx="331.6" cy="308.0" r="1.4"/><circle cx="334.5" cy="306.3" r="1.4"/><circle cx="337.3" cy="304.6" r="1.4"/><circle cx="340.1" cy="302.3" r="1.4"/><circle cx="342.9" cy="300.0" r="1.4"/><circle cx="345.7" cy="297.7" r="1.4"/><circle cx="348.5" cy="295.2" r="1.4"/><circle cx="351.3" cy="292.6" r="1.4"/><circle cx="354.1" cy="290.3" r="1.4"/><circle cx="356.9" cy="288.3" r="1.4"/><circle cx="359.7" cy="286.4" r="1.4"/><circle cx="362.5" cy="284.6" r="1.4"/><circle cx="365.3" cy="283.2" r="1.4"/><circle cx="368.1" cy="281.8" r="1.4"/><circle cx="370.9" cy="280.5" r="1.4"/><circle cx="373.7" cy="279.7" r="1.4"/><circle cx="376.5" cy="278.8" r="1.4"/><circle cx="379.3" cy="278.2" r="1.4"/><circle cx="382.1" cy="278.1" r="1.4"/><circle cx="384.9" cy="277.9" r="1.4"/><circle cx="387.7" cy="277.9" r="1.4"/><circle cx="390.5" cy="278.3" r="1.4"/><circle cx="393.3" cy="278.6" r="1.4"/><circle cx="396.1" cy="278.9" r="1.4"/><circle cx="398.9" cy="279.4" r="1.4"/><circle cx="401.7" cy="279.8" r="1.4"/><circle cx="404.6" cy="280.2" r="1.4"/><circle cx="407.4" cy="280.4" r="1.4"/><circle cx="410.2" cy="280.4" r="1.4"/><circle cx="413.0" cy="280.5" r="1.4"/><circle cx="415.8" cy="280.5" r="1.4"/><circle cx="418.6" cy="280.5" r="1.4"/><circle cx="421.4" cy="280.5" r="1.4"/><circle cx="424.2" cy="280.5" r="1.4"/><circle cx="427.0" cy="280.5" r="1.4"/><circle cx="429.8" cy="280.5" r="1.4"/><circle cx="432.6" cy="281.0" r="1.4"/><circle cx="435.4" cy="281.5" r="1.4"/><circle cx="438.2" cy="282.0" r="1.4"/><circle cx="441.0" cy="282.5" r="1.4"/><circle cx="443.8" cy="283.1" r="1.4"/><circle cx="446.6" cy="283.7" r="1.4"/><circle cx="449.4" cy="284.1" r="1.4"/><circle cx="452.2" cy="284.6" r="1.4"/><circle cx="455.0" cy="285.0" r="1.4"/><circle cx="457.8" cy="285.5" r="1.4"/><circle cx="460.6" cy="286.1" r="1.4"/><circle cx="463.4" cy="287.5" r="1.4"/><circle cx="466.2" cy="288.7" r="1.4"/><circle cx="469.0" cy="289.7" r="1.4"/><circle cx="471.8" cy="289.9" r="1.4"/><circle cx="474.7" cy="289.8" r="1.4"/><circle cx="477.5" cy="289.6" r="1.4"/><circle cx="480.3" cy="289.4" r="1.4"/><circle cx="483.1" cy="289.2" r="1.4"/><circle cx="485.9" cy="288.3" r="1.4"/><circle cx="488.7" cy="287.5" r="1.4"/><circle cx="491.5" cy="287.3" r="1.4"/><circle cx="494.3" cy="287.1" r="1.4"/><circle cx="497.1" cy="287.0" r="1.4"/><circle cx="499.9" cy="286.7" r="1.4"/><circle cx="502.7" cy="286.5" r="1.4"/><circle cx="505.5" cy="286.3" r="1.4"/><circle cx="508.3" cy="286.1" r="1.4"/><circle cx="511.1" cy="285.9" r="1.4"/><circle cx="513.9" cy="285.6" r="1.4"/><circle cx="516.7" cy="284.8" r="1.4"/><circle cx="519.5" cy="284.0" r="1.4"/><circle cx="522.3" cy="283.2" r="1.4"/><circle cx="525.1" cy="282.6" r="1.4"/><circle cx="527.9" cy="282.1" r="1.4"/><circle cx="530.7" cy="281.6" r="1.4"/><circle cx="533.5" cy="281.3" r="1.4"/><circle cx="536.3" cy="281.0" r="1.4"/><circle cx="539.1" cy="280.9" r="1.4"/><circle cx="541.9" cy="281.2" r="1.4"/><circle cx="544.8" cy="281.5" r="1.4"/><circle cx="547.6" cy="281.9" r="1.4"/><circle cx="550.4" cy="282.6" r="1.4"/><circle cx="553.2" cy="283.3" r="1.4"/><circle cx="556.0" cy="284.1" r="1.4"/><circle cx="558.8" cy="285.4" r="1.4"/><circle cx="561.6" cy="286.7" r="1.4"/><circle cx="564.4" cy="288.3" r="1.4"/><circle cx="567.2" cy="290.4" r="1.4"/><circle cx="570.0" cy="292.5" r="1.4"/><circle cx="572.8" cy="293.2" r="1.4"/><circle cx="575.6" cy="294.0" r="1.4"/><circle cx="578.4" cy="294.7" r="1.4"/><circle cx="581.2" cy="295.1" r="1.4"/><circle cx="584.0" cy="295.4" r="1.4"/><circle cx="586.8" cy="295.8" r="1.4"/><circle cx="589.6" cy="296.1" r="1.4"/><circle cx="592.4" cy="296.4" r="1.4"/><circle cx="595.2" cy="296.7" r="1.4"/><circle cx="598.0" cy="297.2" r="1.4"/><circle cx="600.8" cy="297.6" r="1.4"/><circle cx="603.6" cy="298.0" r="1.4"/><circle cx="606.4" cy="298.3" r="1.4"/><circle cx="609.2" cy="298.5" r="1.4"/><circle cx="612.0" cy="298.7" r="1.4"/><circle cx="614.9" cy="298.4" r="1.4"/><circle cx="617.7" cy="298.2" r="1.4"/><circle cx="620.5" cy="297.9" r="1.4"/><circle cx="623.3" cy="297.6" r="1.4"/><circle cx="626.1" cy="297.3" r="1.4"/><circle cx="628.9" cy="296.9" r="1.4"/><circle cx="631.7" cy="296.5" r="1.4"/><circle cx="634.5" cy="296.1" r="1.4"/><circle cx="637.3" cy="295.7" r="1.4"/><circle cx="640.1" cy="295.1" r="1.4"/><circle cx="642.9" cy="294.5" r="1.4"/><circle cx="645.7" cy="293.9" r="1.4"/><circle cx="648.5" cy="293.4" r="1.4"/><circle cx="651.3" cy="292.9" r="1.4"/><circle cx="654.1" cy="292.3" r="1.4"/><circle cx="656.9" cy="291.8" r="1.4"/><circle cx="659.7" cy="291.2" r="1.4"/><circle cx="662.5" cy="290.5" r="1.4"/><circle cx="665.3" cy="289.6" r="1.4"/><circle cx="668.1" cy="288.8" r="1.4"/><circle cx="670.9" cy="288.4" r="1.4"/><circle cx="673.7" cy="288.1" r="1.4"/><circle cx="676.5" cy="288.6" r="1.4"/><circle cx="679.3" cy="289.7" r="1.4"/><circle cx="682.1" cy="292.1" r="1.4"/><circle cx="685.0" cy="295.0" r="1.4"/><circle cx="687.8" cy="296.6" r="1.4"/><circle cx="690.6" cy="298.3" r="1.4"/><circle cx="693.4" cy="299.9" r="1.4"/><circle cx="696.2" cy="301.4" r="1.4"/><circle cx="699.0" cy="302.6" r="1.4"/><circle cx="701.8" cy="303.0" r="1.4"/><circle cx="704.6" cy="303.5" r="1.4"/><circle cx="707.4" cy="303.9" r="1.4"/><circle cx="710.2" cy="304.2" r="1.4"/><circle cx="713.0" cy="304.5" r="1.4"/><circle cx="715.8" cy="304.6" r="1.4"/><circle cx="718.6" cy="304.3" r="1.4"/><circle cx="721.4" cy="304.0" r="1.4"/><circle cx="724.2" cy="303.5" r="1.4"/><circle cx="727.0" cy="302.5" r="1.4"/><circle cx="729.8" cy="301.5" r="1.4"/><circle cx="732.6" cy="300.5" r="1.4"/><circle cx="735.4" cy="299.7" r="1.4"/><circle cx="738.2" cy="298.8" r="1.4"/><circle cx="741.0" cy="298.2" r="1.4"/><circle cx="743.8" cy="297.9" r="1.4"/><circle cx="746.6" cy="297.7" r="1.4"/><circle cx="749.4" cy="297.6" r="1.4"/><circle cx="752.2" cy="297.7" r="1.4"/><circle cx="755.1" cy="297.9" r="1.4"/><circle cx="757.9" cy="298.5" r="1.4"/><circle cx="760.7" cy="299.6" r="1.4"/><circle cx="763.5" cy="300.3" r="1.4"/><circle cx="766.3" cy="300.7" r="1.4"/><circle cx="769.1" cy="301.2" r="1.4"/><circle cx="771.9" cy="301.4" r="1.4"/><circle cx="774.7" cy="301.5" r="1.4"/><circle cx="777.5" cy="301.7" r="1.4"/><circle cx="780.3" cy="301.5" r="1.4"/><circle cx="783.1" cy="301.2" r="1.4"/><circle cx="785.9" cy="300.9" r="1.4"/><circle cx="788.7" cy="300.4" r="1.4"/><circle cx="791.5" cy="299.8" r="1.4"/><circle cx="794.3" cy="299.2" r="1.4"/><circle cx="797.1" cy="298.4" r="1.4"/><circle cx="799.9" cy="297.6" r="1.4"/><circle cx="802.7" cy="296.9" r="1.4"/><circle cx="805.5" cy="295.8" r="1.4"/><circle cx="808.3" cy="294.7" r="1.4"/><circle cx="811.1" cy="293.5" r="1.4"/><circle cx="813.9" cy="292.5" r="1.4"/><circle cx="816.7" cy="291.5" r="1.4"/><circle cx="819.5" cy="290.5" r="1.4"/><circle cx="822.3" cy="289.8" r="1.4"/><circle cx="825.2" cy="289.3" r="1.4"/><circle cx="828.0" cy="288.8" r="1.4"/><circle cx="830.8" cy="288.6" r="1.4"/><circle cx="833.6" cy="288.4" r="1.4"/><circle cx="836.4" cy="288.3" r="1.4"/><circle cx="839.2" cy="288.3" r="1.4"/><circle cx="842.0" cy="288.3" r="1.4"/><circle cx="844.8" cy="288.3" r="1.4"/><circle cx="847.6" cy="288.5" r="1.4"/><circle cx="850.4" cy="288.6" r="1.4"/><circle cx="853.2" cy="289.2" r="1.4"/><circle cx="856.0" cy="290.1" r="1.4"/><circle cx="858.8" cy="290.9" r="1.4"/><circle cx="861.6" cy="291.7" r="1.4"/></g>
<rect x="16.5" y="275.5" width="884.0" height="45" fill="none" stroke="#a9bccd" stroke-width="1"/>
<text x="18" y="287.5" font-size="11" fill="#15158c" textLength="28" lengthAdjust="spacingAndGlyphs">MACD</text>
<text x="909.5" y="297.3" font-size="11" fill="#ffffff" stroke="#ffffff" stroke-width="0.3" textLength="20.5" lengthAdjust="spacingAndGlyphs">+0.0</text>
<path d="M51.5 326.5V402.5" stroke="#6a7784" stroke-width="1" stroke-dasharray="3 3"/>
<path d="M135.5 326.5V402.5" stroke="#7f90a2" stroke-width="1"/>
<path d="M219.5 326.5V402.5" stroke="#6a7784" stroke-width="1" stroke-dasharray="3 3"/>
<path d="M303.5 326.5V402.5" stroke="#6a7784" stroke-width="1" stroke-dasharray="3 3"/>
<path d="M387.5 326.5V402.5" stroke="#6a7784" stroke-width="1" stroke-dasharray="3 3"/>
<path d="M472.5 326.5V402.5" stroke="#7f90a2" stroke-width="1"/>
<path d="M556.5 326.5V402.5" stroke="#6a7784" stroke-width="1" stroke-dasharray="3 3"/>
<path d="M640.5 326.5V402.5" stroke="#6a7784" stroke-width="1" stroke-dasharray="3 3"/>
<path d="M724.5 326.5V402.5" stroke="#6a7784" stroke-width="1" stroke-dasharray="3 3"/>
<path d="M808.5 326.5V402.5" stroke="#7f90a2" stroke-width="1"/>
<path d="M16.5 343.5H900.5" stroke="#6a7784" stroke-width="1" stroke-dasharray="3 3"/>
<path d="M898.0 343.5H904.0" stroke="#a9bccd" stroke-width="1"/>
<path d="M16.5 371.5H900.5" stroke="#6a7784" stroke-width="1" stroke-dasharray="3 3"/>
<path d="M898.0 371.5H904.0" stroke="#a9bccd" stroke-width="1"/>
<rect x="35" y="328" width="826" height="2" fill="#1414a6"/>
<rect x="60" y="384.3" width="749" height="2" fill="#1414a6"/>
<polygon points="16.7,388.0 16.7,363.2 19.2,364.0 21.7,359.8 25.8,356.5 28.3,339.8 30.0,341.5 32.5,339.8 34.2,339.0 36.7,337.3 38.3,345.7 40.8,369.0 43.3,374.0 45.8,377.0 49.2,378.7 51.7,372.3 54.2,364.8 56.7,360.7 60.0,357.8 63.3,361.0 65.8,359.0 70.0,362.0 74.2,364.3 76.7,359.8 79.2,354.0 81.7,355.3 85.0,353.7 88.3,352.7 91.7,347.7 95.0,349.3 100.0,348.2 104.2,344.8 105.8,343.2 107.5,345.7 110.0,340.3 111.7,349.0 113.3,356.0 115.8,353.2 119.2,355.3 123.3,351.5 125.0,345.7 127.0,341.2 129.2,347.3 130.8,352.3 133.3,355.3 135.3,348.2 138.3,353.2 141.7,355.3 145.0,354.8 147.5,351.5 150.8,353.2 155.0,352.3 158.3,352.0 160.0,360.7 162.5,371.2 165.8,365.7 169.2,367.7 172.5,371.5 175.0,364.8 177.5,354.8 180.8,351.0 184.2,353.7 188.3,359.0 191.7,363.2 194.2,364.0 196.7,354.8 200.8,358.7 205.0,355.7 208.3,350.3 211.7,356.5 214.2,357.3 217.5,363.2 219.7,357.3 222.5,363.2 228.3,370.7 231.3,383.2 233.7,378.2 237.5,379.8 239.7,378.2 242.8,370.3 245.0,384.8 247.5,382.3 250.8,384.0 253.3,386.5 257.5,389.8 261.7,399.0 265.0,395.7 268.3,389.0 271.7,384.3 275.0,393.2 278.3,397.3 281.7,380.7 284.2,383.2 289.7,378.2 292.5,387.0 298.3,390.3 301.7,374.0 305.0,383.2 309.2,388.2 312.5,386.0 315.0,360.3 318.3,363.2 323.3,367.3 329.2,366.5 331.3,349.0 333.3,351.5 336.7,346.0 340.0,348.2 343.3,348.2 348.3,338.7 352.5,339.3 356.7,337.7 359.2,343.2 363.3,339.8 366.7,341.0 370.8,338.2 374.2,345.7 378.3,341.5 383.0,336.0 385.8,342.3 388.3,352.3 391.7,355.3 394.2,353.2 396.7,347.3 399.7,343.7 405.0,354.3 410.0,341.5 414.2,342.7 418.3,344.0 421.3,337.3 424.7,354.8 427.5,349.0 430.0,348.7 433.3,356.5 435.8,359.0 438.7,356.5 441.3,359.3 445.0,352.7 448.3,354.0 453.3,354.8 458.0,354.3 460.8,374.0 463.3,372.7 466.3,362.7 469.2,364.8 472.5,353.7 477.5,349.0 480.0,351.5 484.2,343.7 486.7,344.8 494.7,357.3 497.5,350.7 500.8,353.2 505.0,351.5 508.3,347.3 511.3,334.8 514.2,340.7 516.7,338.7 519.2,338.2 522.5,335.7 525.8,340.3 530.0,340.7 533.3,338.7 536.7,339.0 542.5,353.2 547.5,353.7 551.7,369.0 554.2,374.0 556.7,370.7 558.7,378.2 561.3,368.2 565.0,379.0 568.3,382.7 571.7,380.7 575.8,373.2 579.2,370.7 581.7,363.2 584.7,362.3 587.5,369.0 592.5,369.8 595.8,375.7 599.2,384.0 601.7,384.3 605.8,378.2 610.0,372.3 613.3,369.8 614.7,374.8 617.5,359.8 620.3,356.5 623.3,364.8 627.5,371.5 630.8,360.7 635.0,355.7 637.5,353.2 640.3,357.3 642.5,354.8 646.7,362.3 650.8,355.7 653.3,354.0 656.3,345.3 660.0,348.2 663.3,343.2 665.3,337.0 667.5,345.7 671.7,357.3 677.0,369.8 680.0,384.3 684.2,395.3 687.5,388.2 690.0,386.0 693.3,381.5 696.7,382.7 698.3,384.3 701.7,371.5 704.2,367.3 707.5,372.3 712.5,377.3 718.3,369.0 721.7,372.3 724.7,372.3 726.3,359.0 729.2,358.2 732.5,351.5 735.0,359.8 739.2,362.7 745.0,367.3 749.2,372.3 752.5,382.3 755.0,382.3 757.0,378.2 759.7,384.8 761.2,387.3 765.0,378.2 768.3,377.3 770.8,378.7 776.7,369.3 780.3,379.3 782.5,372.3 785.3,353.7 790.8,358.2 795.0,367.7 798.0,365.7 805.8,349.0 809.2,347.3 810.8,348.2 813.3,340.3 816.7,354.3 819.2,349.0 825.0,349.0 830.0,359.8 833.0,357.0 836.7,365.7 840.8,358.2 847.0,343.7 850.8,368.7 853.3,368.7 855.3,362.0 858.3,370.7 860.8,369.0 860.8,388.0" fill="url(#rsig)" clip-path="url(#crsi)"/>
<polyline points="16.7,363.2 19.2,364.0 21.7,359.8 25.8,356.5 28.3,339.8 30.0,341.5 32.5,339.8 34.2,339.0 36.7,337.3 38.3,345.7 40.8,369.0 43.3,374.0 45.8,377.0 49.2,378.7 51.7,372.3 54.2,364.8 56.7,360.7 60.0,357.8 63.3,361.0 65.8,359.0 70.0,362.0 74.2,364.3 76.7,359.8 79.2,354.0 81.7,355.3 85.0,353.7 88.3,352.7 91.7,347.7 95.0,349.3 100.0,348.2 104.2,344.8 105.8,343.2 107.5,345.7 110.0,340.3 111.7,349.0 113.3,356.0 115.8,353.2 119.2,355.3 123.3,351.5 125.0,345.7 127.0,341.2 129.2,347.3 130.8,352.3 133.3,355.3 135.3,348.2 138.3,353.2 141.7,355.3 145.0,354.8 147.5,351.5 150.8,353.2 155.0,352.3 158.3,352.0 160.0,360.7 162.5,371.2 165.8,365.7 169.2,367.7 172.5,371.5 175.0,364.8 177.5,354.8 180.8,351.0 184.2,353.7 188.3,359.0 191.7,363.2 194.2,364.0 196.7,354.8 200.8,358.7 205.0,355.7 208.3,350.3 211.7,356.5 214.2,357.3 217.5,363.2 219.7,357.3 222.5,363.2 228.3,370.7 231.3,383.2 233.7,378.2 237.5,379.8 239.7,378.2 242.8,370.3 245.0,384.8 247.5,382.3 250.8,384.0 253.3,386.5 257.5,389.8 261.7,399.0 265.0,395.7 268.3,389.0 271.7,384.3 275.0,393.2 278.3,397.3 281.7,380.7 284.2,383.2 289.7,378.2 292.5,387.0 298.3,390.3 301.7,374.0 305.0,383.2 309.2,388.2 312.5,386.0 315.0,360.3 318.3,363.2 323.3,367.3 329.2,366.5 331.3,349.0 333.3,351.5 336.7,346.0 340.0,348.2 343.3,348.2 348.3,338.7 352.5,339.3 356.7,337.7 359.2,343.2 363.3,339.8 366.7,341.0 370.8,338.2 374.2,345.7 378.3,341.5 383.0,336.0 385.8,342.3 388.3,352.3 391.7,355.3 394.2,353.2 396.7,347.3 399.7,343.7 405.0,354.3 410.0,341.5 414.2,342.7 418.3,344.0 421.3,337.3 424.7,354.8 427.5,349.0 430.0,348.7 433.3,356.5 435.8,359.0 438.7,356.5 441.3,359.3 445.0,352.7 448.3,354.0 453.3,354.8 458.0,354.3 460.8,374.0 463.3,372.7 466.3,362.7 469.2,364.8 472.5,353.7 477.5,349.0 480.0,351.5 484.2,343.7 486.7,344.8 494.7,357.3 497.5,350.7 500.8,353.2 505.0,351.5 508.3,347.3 511.3,334.8 514.2,340.7 516.7,338.7 519.2,338.2 522.5,335.7 525.8,340.3 530.0,340.7 533.3,338.7 536.7,339.0 542.5,353.2 547.5,353.7 551.7,369.0 554.2,374.0 556.7,370.7 558.7,378.2 561.3,368.2 565.0,379.0 568.3,382.7 571.7,380.7 575.8,373.2 579.2,370.7 581.7,363.2 584.7,362.3 587.5,369.0 592.5,369.8 595.8,375.7 599.2,384.0 601.7,384.3 605.8,378.2 610.0,372.3 613.3,369.8 614.7,374.8 617.5,359.8 620.3,356.5 623.3,364.8 627.5,371.5 630.8,360.7 635.0,355.7 637.5,353.2 640.3,357.3 642.5,354.8 646.7,362.3 650.8,355.7 653.3,354.0 656.3,345.3 660.0,348.2 663.3,343.2 665.3,337.0 667.5,345.7 671.7,357.3 677.0,369.8 680.0,384.3 684.2,395.3 687.5,388.2 690.0,386.0 693.3,381.5 696.7,382.7 698.3,384.3 701.7,371.5 704.2,367.3 707.5,372.3 712.5,377.3 718.3,369.0 721.7,372.3 724.7,372.3 726.3,359.0 729.2,358.2 732.5,351.5 735.0,359.8 739.2,362.7 745.0,367.3 749.2,372.3 752.5,382.3 755.0,382.3 757.0,378.2 759.7,384.8 761.2,387.3 765.0,378.2 768.3,377.3 770.8,378.7 776.7,369.3 780.3,379.3 782.5,372.3 785.3,353.7 790.8,358.2 795.0,367.7 798.0,365.7 805.8,349.0 809.2,347.3 810.8,348.2 813.3,340.3 816.7,354.3 819.2,349.0 825.0,349.0 830.0,359.8 833.0,357.0 836.7,365.7 840.8,358.2 847.0,343.7 850.8,368.7 853.3,368.7 855.3,362.0 858.3,370.7 860.8,369.0" fill="none" stroke="#f08e2a" stroke-width="1" stroke-linejoin="round"/>
<polyline points="242.8,370.3 245.0,384.8" fill="none" stroke="#22e022" stroke-width="1.2" stroke-linejoin="round"/>
<polyline points="253.3,386.5 257.5,389.8 261.7,399.0 265.0,395.7" fill="none" stroke="#22e022" stroke-width="1.2" stroke-linejoin="round"/>
<polyline points="271.7,384.3 275.0,393.2 278.3,397.3" fill="none" stroke="#22e022" stroke-width="1.2" stroke-linejoin="round"/>
<polyline points="289.7,378.2 292.5,387.0 298.3,390.3" fill="none" stroke="#22e022" stroke-width="1.2" stroke-linejoin="round"/>
<polyline points="305.0,383.2 309.2,388.2 312.5,386.0" fill="none" stroke="#22e022" stroke-width="1.2" stroke-linejoin="round"/>
<polyline points="598.0,381.1 599.2,384.0 601.7,384.3" fill="none" stroke="#22e022" stroke-width="1.2" stroke-linejoin="round"/>
<polyline points="680.0,384.3 684.2,395.3 687.5,388.2 688.5,387.3" fill="none" stroke="#22e022" stroke-width="1.2" stroke-linejoin="round"/>
<polyline points="757.0,378.2 759.7,384.8 761.2,387.3" fill="none" stroke="#22e022" stroke-width="1.2" stroke-linejoin="round"/>
<rect x="16.5" y="326.5" width="884.0" height="76" fill="none" stroke="#a9bccd" stroke-width="1"/>
<text x="18" y="338" font-size="11" fill="#e8842c" textLength="15.5" lengthAdjust="spacingAndGlyphs">RSI</text>
<text x="908" y="350" font-size="11" fill="#ffffff" stroke="#ffffff" stroke-width="0.3" textLength="11.2" lengthAdjust="spacingAndGlyphs">60</text>
<text x="908" y="378" font-size="11" fill="#ffffff" stroke="#ffffff" stroke-width="0.3" textLength="11.2" lengthAdjust="spacingAndGlyphs">40</text>
<text x="50.6" y="424.9" font-size="11" fill="#ffffff" stroke="#ffffff" stroke-width="0.3" text-anchor="middle">31</text>
<path d="M51.5 402.5V406" stroke="#a9bccd" stroke-width="1"/>
<text x="134.6" y="424.9" font-size="11" fill="#ffffff" stroke="#ffffff" stroke-width="0.3" text-anchor="middle">7</text>
<path d="M135.5 402.5V406" stroke="#a9bccd" stroke-width="1"/>
<text x="218.6" y="424.9" font-size="11" fill="#ffffff" stroke="#ffffff" stroke-width="0.3" text-anchor="middle">14</text>
<path d="M219.5 402.5V406" stroke="#a9bccd" stroke-width="1"/>
<text x="302.6" y="424.9" font-size="11" fill="#ffffff" stroke="#ffffff" stroke-width="0.3" text-anchor="middle">21</text>
<path d="M303.5 402.5V406" stroke="#a9bccd" stroke-width="1"/>
<text x="386.6" y="424.9" font-size="11" fill="#ffffff" stroke="#ffffff" stroke-width="0.3" text-anchor="middle">28</text>
<path d="M387.5 402.5V406" stroke="#a9bccd" stroke-width="1"/>
<text x="471.6" y="424.9" font-size="11" fill="#ffffff" stroke="#ffffff" stroke-width="0.3" text-anchor="middle">5</text>
<path d="M472.5 402.5V406" stroke="#a9bccd" stroke-width="1"/>
<text x="555.6" y="424.9" font-size="11" fill="#ffffff" stroke="#ffffff" stroke-width="0.3" text-anchor="middle">12</text>
<path d="M556.5 402.5V406" stroke="#a9bccd" stroke-width="1"/>
<text x="639.6" y="424.9" font-size="11" fill="#ffffff" stroke="#ffffff" stroke-width="0.3" text-anchor="middle">19</text>
<path d="M640.5 402.5V406" stroke="#a9bccd" stroke-width="1"/>
<text x="723.6" y="424.9" font-size="11" fill="#ffffff" stroke="#ffffff" stroke-width="0.3" text-anchor="middle">26</text>
<path d="M724.5 402.5V406" stroke="#a9bccd" stroke-width="1"/>
<text x="807.6" y="424.9" font-size="11" fill="#ffffff" stroke="#ffffff" stroke-width="0.3" text-anchor="middle">2</text>
<path d="M808.5 402.5V406" stroke="#a9bccd" stroke-width="1"/>
<path d="M17 379.5H74.5l2 2V396.5l-2 2H17z" fill="url(#lblg)" stroke="#b9cbd9" stroke-width="1"/>
<rect x="16" y="379" width="2" height="27" fill="#cfeaea"/>
<text x="24.8" y="393" font-size="11" fill="#ffffff" stroke="#ffffff" stroke-width="0.3" textLength="44.6" lengthAdjust="spacingAndGlyphs">Авг 2020</text>
<path d="M136 379.5H193.5l2 2V396.5l-2 2H136z" fill="url(#lblg)" stroke="#b9cbd9" stroke-width="1"/>
<rect x="135" y="379" width="2" height="27" fill="#cfeaea"/>
<text x="143.1" y="393" font-size="11" fill="#ffffff" stroke="#ffffff" stroke-width="0.3" textLength="46.2" lengthAdjust="spacingAndGlyphs">Сен 2020</text>
<path d="M473 379.5H530.5l2 2V396.5l-2 2H473z" fill="url(#lblg)" stroke="#b9cbd9" stroke-width="1"/>
<rect x="472" y="379" width="2" height="27" fill="#cfeaea"/>
<text x="480.2" y="393" font-size="11" fill="#ffffff" stroke="#ffffff" stroke-width="0.3" textLength="46.1" lengthAdjust="spacingAndGlyphs">Окт 2020</text>
<path d="M809 379.5H868.5l2 2V396.5l-2 2H809z" fill="url(#lblg)" stroke="#b9cbd9" stroke-width="1"/>
<rect x="808" y="379" width="2" height="27" fill="#cfeaea"/>
<text x="816.3" y="393" font-size="11" fill="#ffffff" stroke="#ffffff" stroke-width="0.3" textLength="47" lengthAdjust="spacingAndGlyphs">Нов 2020</text>
<rect x="16" y="38" width="31" height="22" fill="#f0f0f0"/><rect x="17" y="39" width="29" height="3.6" fill="#dadada"/><rect x="16.5" y="38.5" width="30" height="21" fill="none" stroke="#fafafa" stroke-width="1"/>
<rect x="20.6" y="46.6" width="8.8" height="8.8" rx="1.6" fill="url(#wr)" stroke="#b01826" stroke-width="1"/>
<rect x="33.7" y="46.6" width="8.8" height="8.8" rx="1.6" fill="url(#wb)" stroke="#126ea8" stroke-width="1"/>
</svg>
</body></html>
